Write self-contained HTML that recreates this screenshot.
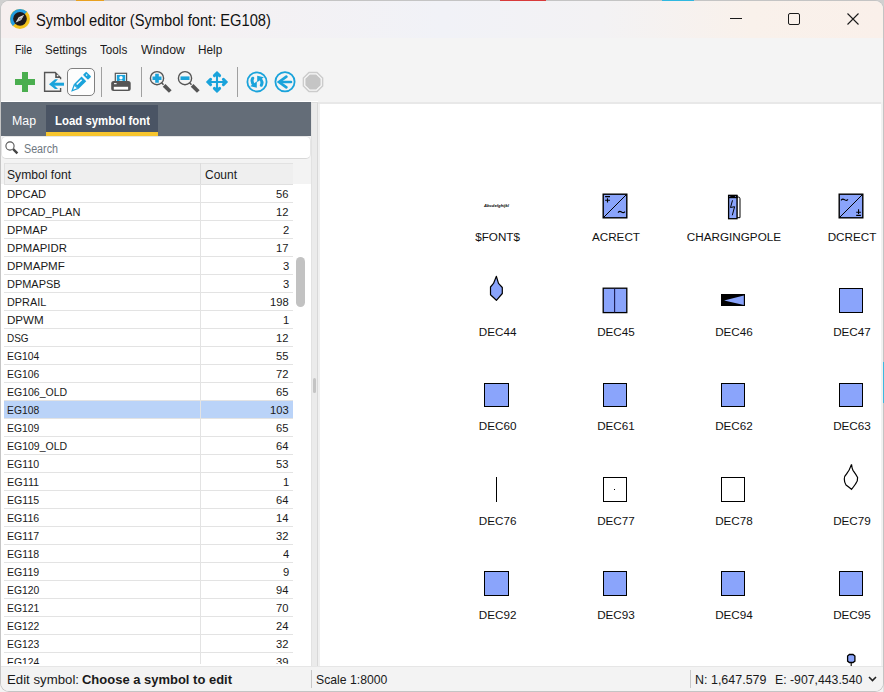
<!DOCTYPE html>
<html><head><meta charset="utf-8">
<style>
*{margin:0;padding:0;box-sizing:border-box}
html,body{width:884px;height:692px;overflow:hidden;background:#c8c8c8;font-family:"Liberation Sans",sans-serif;color:#1a1a1a}
.a{position:absolute}
.t{position:absolute;white-space:nowrap;transform-origin:0 0}
svg{overflow:visible}
</style></head><body>
<div class="a" style="left:0px;top:0px;width:884px;height:692px;background:#f4f4f4;"></div>
<div class="a" style="left:0px;top:0px;width:884px;height:1px;background:#a9a9a9;"></div>
<div class="a" style="left:883px;top:0px;width:1px;height:692px;background:#dedede;"></div>
<div class="a" style="left:0px;top:0px;width:884px;height:14px;background:#d0d0d0;"></div>
<div class="a" style="left:1px;top:1px;width:882px;height:690px;background:#f4f4f4;border-radius:8px;box-shadow:0 0 0 1px #c4c4c4;"></div>
<div class="a" style="left:76px;top:0px;width:28px;height:1px;background:#e8a020;"></div>
<div class="a" style="left:500px;top:0px;width:46px;height:1px;background:#d83a3a;"></div>
<div class="a" style="left:662px;top:0px;width:32px;height:1px;background:#30b8e0;"></div>
<div class="a" style="left:883px;top:362px;width:1px;height:41px;background:#3cb9e0;"></div>
<div class="a" style="left:1px;top:1px;width:882px;height:37px;background:linear-gradient(90deg,#f6efef 0%,#f4f1f3 25%,#f1f2f7 50%,#f3f2f4 68%,#f9f1eb 85%,#faf0ea 100%);border-radius:8px 8px 0 0;"></div>
<svg class="a" style="left:9px;top:8px" width="22" height="22" viewBox="0 0 22 22">
<circle cx="10.95" cy="10.9" r="10" fill="#f4c21a"/>
<path d="M18.02 3.83A10 10 0 0 0 3.88 17.97Z" fill="#229de0"/>
<circle cx="11" cy="10.85" r="6.85" fill="#1f1a1b"/>
<path d="M6.6 14.6L12.07 12.03L15.1 6.8L9.63 9.37Z" fill="#e4e4e4"/>
<path d="M6.6 14.6L15.1 6.8L12.07 12.03Z" fill="#bdbdbd"/>
<circle cx="10.85" cy="10.7" r="0.9" fill="#9a9a9a"/>
</svg>
<div class="t" style="left:36.00px;top:11.52px;font-size:16.4px;line-height:16.4px;color:#111;transform:scaleX(0.8952);">Symbol editor (Symbol font: EG108)</div>
<div class="a" style="left:730px;top:18px;width:12px;height:1px;background:#1a1a1a;"></div>
<div class="a" style="left:788px;top:13px;width:12px;height:12px;border:1px solid #1a1a1a;border-radius:2px"></div>
<svg class="a" style="left:847px;top:13px" width="12" height="12" viewBox="0 0 12 12"><path d="M0.5 0.5L11.5 11.5M11.5 0.5L0.5 11.5" stroke="#1a1a1a" stroke-width="1.1"/></svg>
<div class="t" style="left:14.70px;top:42.80px;font-size:13px;line-height:13px;color:#1a1a1a;transform:scaleX(0.8115);">File</div>
<div class="t" style="left:45.20px;top:42.80px;font-size:13px;line-height:13px;color:#1a1a1a;transform:scaleX(0.8899);">Settings</div>
<div class="t" style="left:100.40px;top:42.80px;font-size:13px;line-height:13px;color:#1a1a1a;transform:scaleX(0.8995);">Tools</div>
<div class="t" style="left:141.20px;top:42.80px;font-size:13px;line-height:13px;color:#1a1a1a;transform:scaleX(0.9516);">Window</div>
<div class="t" style="left:198.40px;top:42.80px;font-size:13px;line-height:13px;color:#1a1a1a;transform:scaleX(0.9051);">Help</div>
<div class="a" style="left:22px;top:72px;width:6px;height:20px;background:#4aae4f;"></div>
<div class="a" style="left:15px;top:79px;width:20px;height:6px;background:#4aae4f;"></div>
<svg class="a" style="left:40px;top:70px" width="26" height="24" viewBox="0 0 26 24">
<path d="M20.6 18V21.3H4.6V2.5H15.2L20.6 7.9V9.3" fill="none" stroke="#555" stroke-width="1.4"/>
<path d="M15.2 2.5V7.9H20.6Z" fill="#555"/>
<circle cx="17.6" cy="5.6" r="0.9" fill="#f4f4f4"/>
<path d="M9 14.2L15 9.3H18L13.3 14.2L18 19.1H15Z" fill="#1aa3db"/><path d="M13 14.2H24" stroke="#1aa3db" stroke-width="3"/>
</svg>
<div class="a" style="left:67px;top:68px;width:28px;height:28px;border:1px solid #808080;border-radius:5px;background:#fdfdfd"></div>
<svg class="a" style="left:66px;top:66px" width="32" height="32" viewBox="0 0 32 32"><g transform="translate(5.1 25.7) rotate(-45)">
<path d="M0 0L7.1 -3.3V3.3Z" fill="#1aa3db"/>
<path d="M2.9 0L6.5 -1.67V1.67Z" fill="#fdfdfd"/>
<rect x="7.1" y="-3.3" width="11" height="6.6" fill="#1aa3db"/>
<rect x="9" y="-1.8" width="6.9" height="1.5" fill="#fdfdfd"/>
<rect x="20.3" y="-3.55" width="4.6" height="7.1" rx="0.8" fill="#1aa3db"/>
<circle cx="22.8" cy="-0.85" r="0.8" fill="#fdfdfd"/>
</g></svg>
<div class="a" style="left:101px;top:67px;width:1px;height:30px;background:#a0a0a0;"></div>
<svg class="a" style="left:109px;top:70px" width="24" height="24" viewBox="0 0 24 24">
<rect x="6.3" y="3.3" width="11.3" height="8.5" fill="#fff" stroke="#555" stroke-width="1.2"/>
<rect x="7.8" y="4.9" width="8.5" height="6.5" fill="#1aa3db"/>
<circle cx="12" cy="7.7" r="1.7" fill="#fff"/><path d="M9.6 11.2Q12 8.6 14.4 11.2Z" fill="#cfeaf7"/>
<rect x="2.2" y="11" width="19.5" height="9.9" rx="2.5" fill="#555"/>
<rect x="5" y="13.1" width="2.6" height="1.1" fill="#fff"/>
<rect x="4.8" y="16.8" width="14.3" height="2.8" fill="#fff"/>
</svg>
<div class="a" style="left:141px;top:67px;width:1px;height:30px;background:#a0a0a0;"></div>
<svg class="a" style="left:143.4px;top:66px" width="32" height="32" viewBox="0 0 32 32"><g transform="translate(14 12.2)">
<circle cx="0" cy="0" r="6.6" fill="none" stroke="#555" stroke-width="1.4"/>
<path d="M4.6 4.6L6.5 6.5" stroke="#555" stroke-width="1.6"/>
<path d="M7.1 7.1L13.3 13.3" stroke="#555" stroke-width="3.8"/>
<path d="M0 -4.5V4.5M-4.5 0H4.5" stroke="#1aa3db" stroke-width="3.6"/></g></svg>
<svg class="a" style="left:171.0px;top:66px" width="32" height="32" viewBox="0 0 32 32"><g transform="translate(14 12.2)">
<circle cx="0" cy="0" r="6.6" fill="none" stroke="#555" stroke-width="1.4"/>
<path d="M4.6 4.6L6.5 6.5" stroke="#555" stroke-width="1.6"/>
<path d="M7.1 7.1L13.3 13.3" stroke="#555" stroke-width="3.8"/>
<path d="M-4.5 0H4.5" stroke="#1aa3db" stroke-width="3.6"/></g></svg>
<svg class="a" style="left:205px;top:70px" width="24" height="24" viewBox="0 0 24 24"><g fill="none" stroke="#1aa3db">
<path d="M12 3V21M3 12H21" stroke-width="2.1"/>
<path d="M9.4 5.6L12 3L14.6 5.6M9.4 18.4L12 21L14.6 18.4M5.6 9.4L3 12L5.6 14.6M18.4 9.4L21 12L18.4 14.6" stroke-width="3.0" stroke-linejoin="miter" stroke-linecap="round"/>
</g></svg>
<div class="a" style="left:237px;top:67px;width:1px;height:30px;background:#a0a0a0;"></div>
<svg class="a" style="left:242px;top:66px" width="32" height="32" viewBox="0 0 32 32"><g transform="translate(-242 -66)">
<circle cx="257" cy="81.9" r="9.6" fill="none" stroke="#1aa3db" stroke-width="1.8"/>
<g id="ra"><path d="M252.7 78.2Q250.8 81.8 254.2 85.2" fill="none" stroke="#1aa3db" stroke-width="3" stroke-linecap="round"/>
<path d="M250.1 86.3L256.8 87.7L256.8 81.3Z" fill="#1aa3db"/></g>
<g transform="rotate(180 257 81.75)"><path d="M252.7 78.2Q250.8 81.8 254.2 85.2" fill="none" stroke="#1aa3db" stroke-width="3" stroke-linecap="round"/>
<path d="M250.1 86.3L256.8 87.7L256.8 81.3Z" fill="#1aa3db"/></g>
</g></svg>
<svg class="a" style="left:270px;top:66px" width="32" height="32" viewBox="0 0 32 32"><g transform="translate(-270 -66)">
<circle cx="285" cy="81.75" r="9.6" fill="none" stroke="#1aa3db" stroke-width="1.8"/>
<path d="M286.4 76.7L279 82L286.4 87.3" fill="none" stroke="#1aa3db" stroke-width="2.7" stroke-linecap="round" stroke-linejoin="miter"/>
<path d="M280.5 82H291" stroke="#1aa3db" stroke-width="2.6" stroke-linecap="round"/>
</g></svg>
<svg class="a" style="left:298px;top:66px" width="32" height="32" viewBox="0 0 32 32"><g transform="translate(15 16)">
<path d="M-9.6 -3.98L-3.98 -9.6L3.98 -9.6L9.6 -3.98L9.6 3.98L3.98 9.6L-3.98 9.6L-9.6 3.98Z" fill="#f8f8f8" stroke="#cccccc" stroke-width="1.5"/>
<path d="M-7.6 -3.15L-3.15 -7.6L3.15 -7.6L7.6 -3.15L7.6 3.15L3.15 7.6L-3.15 7.6L-7.6 3.15Z" fill="#c5c5c5"/>
</g></svg>
<div class="a" style="left:1px;top:102px;width:310px;height:34px;background:#646d78;"></div>
<div class="a" style="left:46px;top:105px;width:112px;height:31px;background:#4a5464;"></div>
<div class="a" style="left:46px;top:132px;width:112px;height:4px;background:#f7c52d;"></div>
<div class="t" style="left:12.10px;top:114.64px;font-size:12px;line-height:12px;color:#ffffff;transform:scaleX(1.0281);">Map</div>
<div class="t" style="left:55.00px;top:114.64px;font-size:12px;line-height:12px;font-weight:bold;color:#ffffff;transform:scaleX(0.9500);">Load symbol font</div>
<div class="a" style="left:1px;top:136px;width:310px;height:23px;background:#fff;border:1px solid #e6e6e6;border-bottom-color:#d8d8d8;border-radius:5px"></div>
<svg class="a" style="left:3.7px;top:139.5px" width="16" height="16" viewBox="0 0 16 16">
<circle cx="6" cy="6" r="4.1" fill="none" stroke="#555" stroke-width="1.1"/>
<path d="M9.2 9.2L13.4 13.4" stroke="#444" stroke-width="2.4"/>
</svg>
<div class="t" style="left:23.80px;top:142.64px;font-size:12px;line-height:12px;color:#6f7881;transform:scaleX(0.8942);">Search</div>
<div class="a" style="left:1px;top:160px;width:310px;height:24px;background:#f3f3f3;"></div>
<div class="a" style="left:1px;top:184px;width:310px;height:483px;background:#ffffff;"></div>
<div class="a" style="left:4px;top:163px;width:289px;height:21px;background:#efefef;"></div>
<div class="a" style="left:4px;top:163px;width:289px;height:1px;background:#e2e2e2;"></div>
<div class="a" style="left:200px;top:163px;width:1px;height:21px;background:#dcdcdc;"></div>
<div class="a" style="left:4px;top:184px;width:289px;height:1px;background:#e2e2e2;"></div>
<div class="t" style="left:7.20px;top:168.84px;font-size:12px;line-height:12px;color:#1a1a1a;transform:scaleX(1.0100);">Symbol font</div>
<div class="t" style="left:204.50px;top:168.84px;font-size:12px;line-height:12px;color:#1a1a1a;transform:scaleX(0.9993);">Count</div>
<div class="a" style="left:4px;top:163px;width:1px;height:22px;background:#e0e0e0;"></div>
<div class="a" style="left:4px;top:184px;width:289px;height:480px;overflow:hidden">
<div class="a" style="left:0px;top:0px;width:289px;height:1px;background:#e0e0e0;"></div>
<div class="a" style="left:0px;top:1px;width:289px;height:17px;background:#ffffff;"></div>
<div class="a" style="left:0px;top:19px;width:289px;height:17px;background:#ffffff;"></div>
<div class="a" style="left:0px;top:37px;width:289px;height:17px;background:#ffffff;"></div>
<div class="a" style="left:0px;top:55px;width:289px;height:17px;background:#ffffff;"></div>
<div class="a" style="left:0px;top:73px;width:289px;height:17px;background:#ffffff;"></div>
<div class="a" style="left:0px;top:91px;width:289px;height:17px;background:#ffffff;"></div>
<div class="a" style="left:0px;top:109px;width:289px;height:17px;background:#ffffff;"></div>
<div class="a" style="left:0px;top:127px;width:289px;height:17px;background:#ffffff;"></div>
<div class="a" style="left:0px;top:145px;width:289px;height:17px;background:#ffffff;"></div>
<div class="a" style="left:0px;top:163px;width:289px;height:17px;background:#ffffff;"></div>
<div class="a" style="left:0px;top:181px;width:289px;height:17px;background:#ffffff;"></div>
<div class="a" style="left:0px;top:199px;width:289px;height:17px;background:#ffffff;"></div>
<div class="a" style="left:0px;top:217px;width:289px;height:17px;background:#bad3f8;"></div>
<div class="a" style="left:0px;top:235px;width:289px;height:17px;background:#ffffff;"></div>
<div class="a" style="left:0px;top:253px;width:289px;height:17px;background:#ffffff;"></div>
<div class="a" style="left:0px;top:271px;width:289px;height:17px;background:#ffffff;"></div>
<div class="a" style="left:0px;top:289px;width:289px;height:17px;background:#ffffff;"></div>
<div class="a" style="left:0px;top:307px;width:289px;height:17px;background:#ffffff;"></div>
<div class="a" style="left:0px;top:325px;width:289px;height:17px;background:#ffffff;"></div>
<div class="a" style="left:0px;top:343px;width:289px;height:17px;background:#ffffff;"></div>
<div class="a" style="left:0px;top:361px;width:289px;height:17px;background:#ffffff;"></div>
<div class="a" style="left:0px;top:379px;width:289px;height:17px;background:#ffffff;"></div>
<div class="a" style="left:0px;top:397px;width:289px;height:17px;background:#ffffff;"></div>
<div class="a" style="left:0px;top:415px;width:289px;height:17px;background:#ffffff;"></div>
<div class="a" style="left:0px;top:433px;width:289px;height:17px;background:#ffffff;"></div>
<div class="a" style="left:0px;top:451px;width:289px;height:17px;background:#ffffff;"></div>
<div class="a" style="left:0px;top:469px;width:289px;height:17px;background:#ffffff;"></div>
<div class="a" style="left:0px;top:18px;width:289px;height:1px;background:#e3e3e3;"></div>
<div class="a" style="left:196px;top:0px;width:1px;height:18px;background:#e3e3e3;"></div>
<div class="t" style="left:3.20px;top:4.55px;font-size:11.4px;line-height:11.4px;color:#1a1a1a;transform:scaleX(0.9825);">DPCAD</div>
<div class="t" style="left:272.34px;top:4.55px;font-size:11.4px;line-height:11.4px;color:#1a1a1a;transform:scaleX(0.9825);">56</div>
<div class="a" style="left:0px;top:36px;width:289px;height:1px;background:#e3e3e3;"></div>
<div class="a" style="left:196px;top:18px;width:1px;height:18px;background:#e3e3e3;"></div>
<div class="t" style="left:3.20px;top:22.55px;font-size:11.4px;line-height:11.4px;color:#1a1a1a;transform:scaleX(0.9661);">DPCAD_PLAN</div>
<div class="t" style="left:272.34px;top:22.55px;font-size:11.4px;line-height:11.4px;color:#1a1a1a;transform:scaleX(0.9825);">12</div>
<div class="a" style="left:0px;top:54px;width:289px;height:1px;background:#e3e3e3;"></div>
<div class="a" style="left:196px;top:36px;width:1px;height:18px;background:#e3e3e3;"></div>
<div class="t" style="left:3.20px;top:40.55px;font-size:11.4px;line-height:11.4px;color:#1a1a1a;transform:scaleX(1.0009);">DPMAP</div>
<div class="t" style="left:278.57px;top:40.55px;font-size:11.4px;line-height:11.4px;color:#1a1a1a;transform:scaleX(0.9825);">2</div>
<div class="a" style="left:0px;top:72px;width:289px;height:1px;background:#e3e3e3;"></div>
<div class="a" style="left:196px;top:54px;width:1px;height:18px;background:#e3e3e3;"></div>
<div class="t" style="left:3.20px;top:58.55px;font-size:11.4px;line-height:11.4px;color:#1a1a1a;transform:scaleX(0.9949);">DPMAPIDR</div>
<div class="t" style="left:272.34px;top:58.55px;font-size:11.4px;line-height:11.4px;color:#1a1a1a;transform:scaleX(0.9825);">17</div>
<div class="a" style="left:0px;top:90px;width:289px;height:1px;background:#e3e3e3;"></div>
<div class="a" style="left:196px;top:72px;width:1px;height:18px;background:#e3e3e3;"></div>
<div class="t" style="left:3.20px;top:76.55px;font-size:11.4px;line-height:11.4px;color:#1a1a1a;transform:scaleX(1.0146);">DPMAPMF</div>
<div class="t" style="left:278.57px;top:76.55px;font-size:11.4px;line-height:11.4px;color:#1a1a1a;transform:scaleX(0.9825);">3</div>
<div class="a" style="left:0px;top:108px;width:289px;height:1px;background:#e3e3e3;"></div>
<div class="a" style="left:196px;top:90px;width:1px;height:18px;background:#e3e3e3;"></div>
<div class="t" style="left:3.20px;top:94.55px;font-size:11.4px;line-height:11.4px;color:#1a1a1a;transform:scaleX(0.9623);">DPMAPSB</div>
<div class="t" style="left:278.57px;top:94.55px;font-size:11.4px;line-height:11.4px;color:#1a1a1a;transform:scaleX(0.9825);">3</div>
<div class="a" style="left:0px;top:126px;width:289px;height:1px;background:#e3e3e3;"></div>
<div class="a" style="left:196px;top:108px;width:1px;height:18px;background:#e3e3e3;"></div>
<div class="t" style="left:3.20px;top:112.55px;font-size:11.4px;line-height:11.4px;color:#1a1a1a;transform:scaleX(0.9522);">DPRAIL</div>
<div class="t" style="left:266.11px;top:112.55px;font-size:11.4px;line-height:11.4px;color:#1a1a1a;transform:scaleX(0.9825);">198</div>
<div class="a" style="left:0px;top:144px;width:289px;height:1px;background:#e3e3e3;"></div>
<div class="a" style="left:196px;top:126px;width:1px;height:18px;background:#e3e3e3;"></div>
<div class="t" style="left:3.20px;top:130.55px;font-size:11.4px;line-height:11.4px;color:#1a1a1a;transform:scaleX(1.0178);">DPWM</div>
<div class="t" style="left:278.57px;top:130.55px;font-size:11.4px;line-height:11.4px;color:#1a1a1a;transform:scaleX(0.9825);">1</div>
<div class="a" style="left:0px;top:162px;width:289px;height:1px;background:#e3e3e3;"></div>
<div class="a" style="left:196px;top:144px;width:1px;height:18px;background:#e3e3e3;"></div>
<div class="t" style="left:3.20px;top:148.55px;font-size:11.4px;line-height:11.4px;color:#1a1a1a;transform:scaleX(0.8736);">DSG</div>
<div class="t" style="left:272.34px;top:148.55px;font-size:11.4px;line-height:11.4px;color:#1a1a1a;transform:scaleX(0.9825);">12</div>
<div class="a" style="left:0px;top:180px;width:289px;height:1px;background:#e3e3e3;"></div>
<div class="a" style="left:196px;top:162px;width:1px;height:18px;background:#e3e3e3;"></div>
<div class="t" style="left:3.20px;top:166.55px;font-size:11.4px;line-height:11.4px;color:#1a1a1a;transform:scaleX(0.9067);">EG104</div>
<div class="t" style="left:272.34px;top:166.55px;font-size:11.4px;line-height:11.4px;color:#1a1a1a;transform:scaleX(0.9825);">55</div>
<div class="a" style="left:0px;top:198px;width:289px;height:1px;background:#e3e3e3;"></div>
<div class="a" style="left:196px;top:180px;width:1px;height:18px;background:#e3e3e3;"></div>
<div class="t" style="left:3.20px;top:184.55px;font-size:11.4px;line-height:11.4px;color:#1a1a1a;transform:scaleX(0.9067);">EG106</div>
<div class="t" style="left:272.34px;top:184.55px;font-size:11.4px;line-height:11.4px;color:#1a1a1a;transform:scaleX(0.9825);">72</div>
<div class="a" style="left:0px;top:216px;width:289px;height:1px;background:#e3e3e3;"></div>
<div class="a" style="left:196px;top:198px;width:1px;height:18px;background:#e3e3e3;"></div>
<div class="t" style="left:3.20px;top:202.55px;font-size:11.4px;line-height:11.4px;color:#1a1a1a;transform:scaleX(0.9222);">EG106_OLD</div>
<div class="t" style="left:272.34px;top:202.55px;font-size:11.4px;line-height:11.4px;color:#1a1a1a;transform:scaleX(0.9825);">65</div>
<div class="a" style="left:0px;top:234px;width:289px;height:1px;background:#e3e3e3;"></div>
<div class="a" style="left:196px;top:216px;width:1px;height:18px;background:#e3e3e3;"></div>
<div class="t" style="left:3.20px;top:220.55px;font-size:11.4px;line-height:11.4px;color:#1a1a1a;transform:scaleX(0.9067);">EG108</div>
<div class="t" style="left:266.11px;top:220.55px;font-size:11.4px;line-height:11.4px;color:#1a1a1a;transform:scaleX(0.9825);">103</div>
<div class="a" style="left:0px;top:252px;width:289px;height:1px;background:#e3e3e3;"></div>
<div class="a" style="left:196px;top:234px;width:1px;height:18px;background:#e3e3e3;"></div>
<div class="t" style="left:3.20px;top:238.55px;font-size:11.4px;line-height:11.4px;color:#1a1a1a;transform:scaleX(0.9067);">EG109</div>
<div class="t" style="left:272.34px;top:238.55px;font-size:11.4px;line-height:11.4px;color:#1a1a1a;transform:scaleX(0.9825);">65</div>
<div class="a" style="left:0px;top:270px;width:289px;height:1px;background:#e3e3e3;"></div>
<div class="a" style="left:196px;top:252px;width:1px;height:18px;background:#e3e3e3;"></div>
<div class="t" style="left:3.20px;top:256.55px;font-size:11.4px;line-height:11.4px;color:#1a1a1a;transform:scaleX(0.9222);">EG109_OLD</div>
<div class="t" style="left:272.34px;top:256.55px;font-size:11.4px;line-height:11.4px;color:#1a1a1a;transform:scaleX(0.9825);">64</div>
<div class="a" style="left:0px;top:288px;width:289px;height:1px;background:#e3e3e3;"></div>
<div class="a" style="left:196px;top:270px;width:1px;height:18px;background:#e3e3e3;"></div>
<div class="t" style="left:3.20px;top:274.55px;font-size:11.4px;line-height:11.4px;color:#1a1a1a;transform:scaleX(0.9288);">EG110</div>
<div class="t" style="left:272.34px;top:274.55px;font-size:11.4px;line-height:11.4px;color:#1a1a1a;transform:scaleX(0.9825);">53</div>
<div class="a" style="left:0px;top:306px;width:289px;height:1px;background:#e3e3e3;"></div>
<div class="a" style="left:196px;top:288px;width:1px;height:18px;background:#e3e3e3;"></div>
<div class="t" style="left:3.20px;top:292.55px;font-size:11.4px;line-height:11.4px;color:#1a1a1a;transform:scaleX(0.9521);">EG111</div>
<div class="t" style="left:278.57px;top:292.55px;font-size:11.4px;line-height:11.4px;color:#1a1a1a;transform:scaleX(0.9825);">1</div>
<div class="a" style="left:0px;top:324px;width:289px;height:1px;background:#e3e3e3;"></div>
<div class="a" style="left:196px;top:306px;width:1px;height:18px;background:#e3e3e3;"></div>
<div class="t" style="left:3.20px;top:310.55px;font-size:11.4px;line-height:11.4px;color:#1a1a1a;transform:scaleX(0.9288);">EG115</div>
<div class="t" style="left:272.34px;top:310.55px;font-size:11.4px;line-height:11.4px;color:#1a1a1a;transform:scaleX(0.9825);">64</div>
<div class="a" style="left:0px;top:342px;width:289px;height:1px;background:#e3e3e3;"></div>
<div class="a" style="left:196px;top:324px;width:1px;height:18px;background:#e3e3e3;"></div>
<div class="t" style="left:3.20px;top:328.55px;font-size:11.4px;line-height:11.4px;color:#1a1a1a;transform:scaleX(0.9288);">EG116</div>
<div class="t" style="left:272.34px;top:328.55px;font-size:11.4px;line-height:11.4px;color:#1a1a1a;transform:scaleX(0.9825);">14</div>
<div class="a" style="left:0px;top:360px;width:289px;height:1px;background:#e3e3e3;"></div>
<div class="a" style="left:196px;top:342px;width:1px;height:18px;background:#e3e3e3;"></div>
<div class="t" style="left:3.20px;top:346.55px;font-size:11.4px;line-height:11.4px;color:#1a1a1a;transform:scaleX(0.9288);">EG117</div>
<div class="t" style="left:272.34px;top:346.55px;font-size:11.4px;line-height:11.4px;color:#1a1a1a;transform:scaleX(0.9825);">32</div>
<div class="a" style="left:0px;top:378px;width:289px;height:1px;background:#e3e3e3;"></div>
<div class="a" style="left:196px;top:360px;width:1px;height:18px;background:#e3e3e3;"></div>
<div class="t" style="left:3.20px;top:364.55px;font-size:11.4px;line-height:11.4px;color:#1a1a1a;transform:scaleX(0.9288);">EG118</div>
<div class="t" style="left:278.57px;top:364.55px;font-size:11.4px;line-height:11.4px;color:#1a1a1a;transform:scaleX(0.9825);">4</div>
<div class="a" style="left:0px;top:396px;width:289px;height:1px;background:#e3e3e3;"></div>
<div class="a" style="left:196px;top:378px;width:1px;height:18px;background:#e3e3e3;"></div>
<div class="t" style="left:3.20px;top:382.55px;font-size:11.4px;line-height:11.4px;color:#1a1a1a;transform:scaleX(0.9288);">EG119</div>
<div class="t" style="left:278.57px;top:382.55px;font-size:11.4px;line-height:11.4px;color:#1a1a1a;transform:scaleX(0.9825);">9</div>
<div class="a" style="left:0px;top:414px;width:289px;height:1px;background:#e3e3e3;"></div>
<div class="a" style="left:196px;top:396px;width:1px;height:18px;background:#e3e3e3;"></div>
<div class="t" style="left:3.20px;top:400.55px;font-size:11.4px;line-height:11.4px;color:#1a1a1a;transform:scaleX(0.9067);">EG120</div>
<div class="t" style="left:272.34px;top:400.55px;font-size:11.4px;line-height:11.4px;color:#1a1a1a;transform:scaleX(0.9825);">94</div>
<div class="a" style="left:0px;top:432px;width:289px;height:1px;background:#e3e3e3;"></div>
<div class="a" style="left:196px;top:414px;width:1px;height:18px;background:#e3e3e3;"></div>
<div class="t" style="left:3.20px;top:418.55px;font-size:11.4px;line-height:11.4px;color:#1a1a1a;transform:scaleX(0.9067);">EG121</div>
<div class="t" style="left:272.34px;top:418.55px;font-size:11.4px;line-height:11.4px;color:#1a1a1a;transform:scaleX(0.9825);">70</div>
<div class="a" style="left:0px;top:450px;width:289px;height:1px;background:#e3e3e3;"></div>
<div class="a" style="left:196px;top:432px;width:1px;height:18px;background:#e3e3e3;"></div>
<div class="t" style="left:3.20px;top:436.55px;font-size:11.4px;line-height:11.4px;color:#1a1a1a;transform:scaleX(0.9067);">EG122</div>
<div class="t" style="left:272.34px;top:436.55px;font-size:11.4px;line-height:11.4px;color:#1a1a1a;transform:scaleX(0.9825);">24</div>
<div class="a" style="left:0px;top:468px;width:289px;height:1px;background:#e3e3e3;"></div>
<div class="a" style="left:196px;top:450px;width:1px;height:18px;background:#e3e3e3;"></div>
<div class="t" style="left:3.20px;top:454.55px;font-size:11.4px;line-height:11.4px;color:#1a1a1a;transform:scaleX(0.9067);">EG123</div>
<div class="t" style="left:272.34px;top:454.55px;font-size:11.4px;line-height:11.4px;color:#1a1a1a;transform:scaleX(0.9825);">32</div>
<div class="a" style="left:0px;top:486px;width:289px;height:1px;background:#e3e3e3;"></div>
<div class="a" style="left:196px;top:468px;width:1px;height:18px;background:#e3e3e3;"></div>
<div class="t" style="left:3.20px;top:472.55px;font-size:11.4px;line-height:11.4px;color:#1a1a1a;transform:scaleX(0.9067);">EG124</div>
<div class="t" style="left:272.34px;top:472.55px;font-size:11.4px;line-height:11.4px;color:#1a1a1a;transform:scaleX(0.9825);">39</div>
</div>
<div class="a" style="left:296px;top:257px;width:9px;height:50px;background:#c2c2c2;border-radius:4.5px;"></div>
<div class="a" style="left:311px;top:102px;width:7px;height:565px;background:#ebebeb;"></div>
<div class="a" style="left:311px;top:102px;width:1px;height:565px;background:#e2e2e2;"></div>
<div class="a" style="left:317px;top:102px;width:1px;height:565px;background:#d8d8d8;"></div>
<div class="a" style="left:311px;top:102px;width:7px;height:1px;background:#dedede;"></div>
<div class="a" style="left:311px;top:666px;width:7px;height:1px;background:#dedede;"></div>
<div class="a" style="left:313px;top:378px;width:3px;height:15px;background:#c4c4c4;border-radius:1.5px;"></div>
<div class="a" style="left:1px;top:101px;width:317px;height:1px;background:#ffffff;"></div>
<div class="a" style="left:318px;top:102px;width:564px;height:565px;background:#f0f0f0;"></div>
<div class="a" style="left:318px;top:102px;width:564px;height:2px;background:#e8e8e8;"></div>
<div class="a" style="left:320px;top:104px;width:561px;height:562px;background:#ffffff;"></div>
<div class="a" style="left:881px;top:102px;width:2px;height:565px;background:#f1f1f1;"></div>
<div class="t" style="left:475.17px;top:230.90px;font-size:11.7px;line-height:11.7px;color:#111;">$FONT$</div>
<div class="t" style="left:591.95px;top:230.90px;font-size:11.7px;line-height:11.7px;color:#111;">ACRECT</div>
<div class="t" style="left:686.86px;top:230.90px;font-size:11.7px;line-height:11.7px;color:#111;">CHARGINGPOLE</div>
<div class="t" style="left:827.63px;top:230.90px;font-size:11.7px;line-height:11.7px;color:#111;">DCRECT</div>
<div class="t" style="left:478.74px;top:326.30px;font-size:11.7px;line-height:11.7px;color:#111;">DEC44</div>
<div class="t" style="left:597.14px;top:326.30px;font-size:11.7px;line-height:11.7px;color:#111;">DEC45</div>
<div class="t" style="left:715.14px;top:326.30px;font-size:11.7px;line-height:11.7px;color:#111;">DEC46</div>
<div class="t" style="left:833.14px;top:326.30px;font-size:11.7px;line-height:11.7px;color:#111;">DEC47</div>
<div class="t" style="left:478.74px;top:420.10px;font-size:11.7px;line-height:11.7px;color:#111;">DEC60</div>
<div class="t" style="left:597.14px;top:420.10px;font-size:11.7px;line-height:11.7px;color:#111;">DEC61</div>
<div class="t" style="left:715.14px;top:420.10px;font-size:11.7px;line-height:11.7px;color:#111;">DEC62</div>
<div class="t" style="left:833.14px;top:420.10px;font-size:11.7px;line-height:11.7px;color:#111;">DEC63</div>
<div class="t" style="left:478.74px;top:514.90px;font-size:11.7px;line-height:11.7px;color:#111;">DEC76</div>
<div class="t" style="left:597.14px;top:514.90px;font-size:11.7px;line-height:11.7px;color:#111;">DEC77</div>
<div class="t" style="left:715.14px;top:514.90px;font-size:11.7px;line-height:11.7px;color:#111;">DEC78</div>
<div class="t" style="left:833.14px;top:514.90px;font-size:11.7px;line-height:11.7px;color:#111;">DEC79</div>
<div class="t" style="left:478.74px;top:609.10px;font-size:11.7px;line-height:11.7px;color:#111;">DEC92</div>
<div class="t" style="left:597.14px;top:609.10px;font-size:11.7px;line-height:11.7px;color:#111;">DEC93</div>
<div class="t" style="left:715.14px;top:609.10px;font-size:11.7px;line-height:11.7px;color:#111;">DEC94</div>
<div class="t" style="left:833.14px;top:609.10px;font-size:11.7px;line-height:11.7px;color:#111;">DEC95</div>
<svg class="a" style="left:483px;top:203px" width="28" height="6" viewBox="0 0 28 6"><text x="1" y="4.2" font-size="4.2" font-family="Liberation Sans" font-weight="bold" fill="#000" textLength="25" lengthAdjust="spacingAndGlyphs" font-style="italic">Abcdefghijkl</text></svg>
<svg class="a" style="left:602px;top:193px" width="26" height="26" viewBox="0 0 26 26">
<rect x="1.2" y="1.2" width="23.6" height="23.6" fill="#8aa4fb" stroke="#000" stroke-width="1.4"/>
<path d="M1.5 24.5L24.5 1.5" stroke="#000" stroke-width="1"/>
<path d="M3.1 3.6H8M3.1 7.3H8M5.5 5.3V9.6" stroke="#000" stroke-width="1.1"/>
<path d="M16 19.6Q17.6 17.6 19.5 19Q21.3 20.5 23 18.6" fill="none" stroke="#000" stroke-width="1.1"/>
</svg>
<svg class="a" style="left:727px;top:194px" width="14" height="26" viewBox="0 0 14 26">
<path d="M9.9 3H11.3Q13 3 13 4.8V23.7H9.9Z" fill="#fff" stroke="#000" stroke-width="1"/>
<rect x="1.6" y="1.5" width="8.4" height="23.2" fill="#8aa4fb" stroke="#000" stroke-width="1.3"/>
<rect x="1.1" y="0.8" width="9.3" height="3.4" fill="#000"/>
<circle cx="2.8" cy="2.6" r="0.5" fill="#8aa4fb"/><circle cx="8.4" cy="2.6" r="0.5" fill="#8aa4fb"/>
<path d="M5.5 6.3L3.5 13.5L7.6 12.7L5.3 21.3" fill="none" stroke="#000" stroke-width="1"/>
</svg>
<svg class="a" style="left:838px;top:193px" width="26" height="26" viewBox="0 0 26 26">
<rect x="1.2" y="1.2" width="23.6" height="23.6" fill="#8aa4fb" stroke="#000" stroke-width="1.4"/>
<path d="M1.5 24.5L24.5 1.5" stroke="#000" stroke-width="1"/>
<path d="M3 7.3Q4.6 5.3 6.5 6.7Q8.3 8.2 10 6.3" fill="none" stroke="#000" stroke-width="1.1"/>
<path d="M18.2 19.2H22.9M18.2 22.4H22.9M20.55 16.3V21" stroke="#000" stroke-width="1.1"/>
</svg>
<svg class="a" style="left:488px;top:274px" width="17" height="29" viewBox="0 0 17 29"><path d="M8.4 2.3L10.5 9.4L14.3 13.5V19.5L8.4 26.3L2.5 20.8V13L5.5 9.4Z" fill="#8aa4fb" stroke="#000" stroke-width="1.2" stroke-linejoin="round"/></svg>
<svg class="a" style="left:602px;top:287px" width="26" height="27" viewBox="0 0 26 27">
<rect x="1.2" y="1.2" width="23.6" height="24.4" fill="#8aa4fb" stroke="#000" stroke-width="1.3"/>
<path d="M12.6 1.2V25.6" stroke="#1a1a50" stroke-width="1.1"/>
</svg>
<svg class="a" style="left:720px;top:293px" width="26" height="14" viewBox="0 0 26 14">
<rect x="1" y="1" width="24" height="12" fill="#000"/>
<path d="M4.1 7.4L23.8 2.6V12Z" fill="#8aa4fb"/>
</svg>
<div class="a" style="left:839.2px;top:287.5px;width:24px;height:25px;background:#8aa4fb;border:1.2px solid #000"></div>
<div class="a" style="left:484.20000000000005px;top:383px;width:24.6px;height:24px;background:#8aa4fb;border:1.2px solid #000"></div>
<div class="a" style="left:602.6px;top:383px;width:24.6px;height:24px;background:#8aa4fb;border:1.2px solid #000"></div>
<div class="a" style="left:720.6px;top:383px;width:24.6px;height:24px;background:#8aa4fb;border:1.2px solid #000"></div>
<div class="a" style="left:838.6px;top:383px;width:24.6px;height:24px;background:#8aa4fb;border:1.2px solid #000"></div>
<div class="a" style="left:496px;top:477px;width:1.2px;height:25px;background:#000;"></div>
<div class="a" style="left:603px;top:477px;width:24px;height:25px;background:#fff;border:1.2px solid #000"></div>
<div class="a" style="left:614.2px;top:489px;width:1.3px;height:1px;background:#000;"></div>
<div class="a" style="left:721px;top:477px;width:24px;height:25px;background:#fff;border:1.2px solid #000"></div>
<svg class="a" style="left:842px;top:462px" width="18" height="30" viewBox="0 0 18 30"><path d="M9.5 2.4Q10 6.8 11 8.3Q14 12.4 15.6 15.5Q16 19 13.5 22Q11.5 25 9.5 27.3Q6 24.5 4 23Q2.3 20.5 2.3 17Q2.3 14 4.5 12Q7.5 8.5 9.5 2.4Z" fill="none" stroke="#000" stroke-width="1.2"/></svg>
<div class="a" style="left:484.20000000000005px;top:571px;width:24.6px;height:25px;background:#8aa4fb;border:1.2px solid #000"></div>
<div class="a" style="left:602.6px;top:571px;width:24.6px;height:25px;background:#8aa4fb;border:1.2px solid #000"></div>
<div class="a" style="left:720.6px;top:571px;width:24.6px;height:25px;background:#8aa4fb;border:1.2px solid #000"></div>
<div class="a" style="left:838.6px;top:571px;width:24.6px;height:25px;background:#8aa4fb;border:1.2px solid #000"></div>
<svg class="a" style="left:845px;top:652px" width="14" height="16" viewBox="0 0 14 16"><path d="M4.4 2.5H8L9.9 4V9.1L8 10.5H4.4L2.6 9.1V4Z" fill="#8aa4fb" stroke="#000" stroke-width="1.3"/><path d="M6.2 10.5V14" stroke="#000" stroke-width="1.1"/></svg>
<div class="a" style="left:1px;top:667px;width:882px;height:24px;background:#f3f3f3;border-radius:0 0 8px 8px;"></div>
<div class="a" style="left:1px;top:666px;width:882px;height:1px;background:#e6e6e6;"></div>
<div class="t" style="left:6.80px;top:673.20px;font-size:13px;line-height:13px;color:#1a1a1a;transform:scaleX(1.0169);">Edit symbol:</div>
<div class="t" style="left:82.30px;top:673.20px;font-size:13px;line-height:13px;font-weight:bold;color:#1a1a1a;transform:scaleX(0.9984);">Choose a symbol to edit</div>
<div class="a" style="left:311px;top:670px;width:1px;height:18px;background:#c8c8c8;"></div>
<div class="t" style="left:316.30px;top:673.20px;font-size:13px;line-height:13px;color:#1a1a1a;transform:scaleX(0.9395);">Scale 1:8000</div>
<div class="a" style="left:690px;top:670px;width:1px;height:18px;background:#c8c8c8;"></div>
<div class="t" style="left:695.00px;top:673.20px;font-size:13px;line-height:13px;color:#1a1a1a;transform:scaleX(0.9604);">N: 1,647.579</div>
<div class="t" style="left:775.00px;top:673.20px;font-size:13px;line-height:13px;color:#1a1a1a;transform:scaleX(0.9436);">E: -907,443.540</div>
<svg class="a" style="left:868px;top:676px" width="9" height="6" viewBox="0 0 9 6"><path d="M1 1L4.5 4.5L8 1" fill="none" stroke="#222" stroke-width="1.6"/></svg>
</body></html>
